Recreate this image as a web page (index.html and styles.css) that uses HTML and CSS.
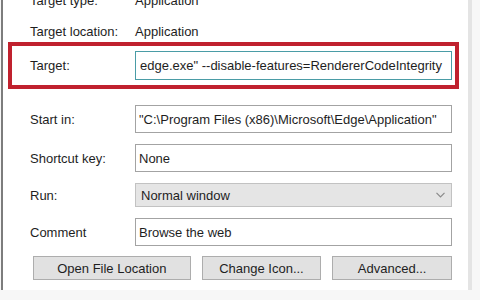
FILE: index.html
```html
<!DOCTYPE html>
<html lang="en">
<head>
  <meta charset="UTF-8">
  <title>Properties - Shortcut</title>
  <link rel="stylesheet" href="styles.css">
</head>
<body>
  <div class="sheet">
    <div class="info first">
      <span class="label">Target type:</span>
      <span class="value">Application</span>
    </div>
    <div class="info second">
      <span class="label">Target location:</span>
      <span class="value">Application</span>
    </div>

    <div class="highlight">
      <div class="field">
        <label class="label" for="target">Target:</label>
        <input type="text" id="target" class="text focused" value="edge.exe&quot; --disable-features=RendererCodeIntegrity">
      </div>
    </div>

    <div class="field start">
      <label class="label" for="startIn">Start in:</label>
      <input type="text" id="startIn" class="text" value="&quot;C:\Program Files (x86)\Microsoft\Edge\Application&quot;">
    </div>
    <div class="field">
      <label class="label" for="hotkey">Shortcut key:</label>
      <input type="text" id="hotkey" class="text" value="None">
    </div>
    <div class="field">
      <label class="label" for="run">Run:</label>
      <div class="select" id="run">
        <span>Normal window</span>
        <svg width="9" height="6" viewBox="0 0 9 6"><polyline points="0.5,0.8 4.5,4.8 8.5,0.8" fill="none" stroke="#8a8a8a" stroke-width="1.2"/></svg>
      </div>
    </div>
    <div class="field">
      <label class="label" for="comment">Comment</label>
      <input type="text" id="comment" class="text" value="Browse the web">
    </div>

    <div class="buttons">
      <button class="btn wide">Open File Location</button>
      <button class="btn">Change Icon...</button>
      <button class="btn">Advanced...</button>
    </div>
  </div>
</body>
</html>
```

FILE: styles.css
```css
body {
  margin: 0;
  background-color: #f7f7f7;
  font-family: "Liberation Sans", Arial, sans-serif;
  font-size: 13px;
  color: #1e1e1e;
  overflow: hidden;
}
.sheet {
  margin-left: 1px;
  width: 422px;
  height: 300px;
  padding: 0 16px 0 27px;
  background-color: #fff;
  border-left: 2px solid #7d7d7d;
  border-right: 4px solid #e4e4e4;
}
.info {
  display: flex;
  height: 22px;
  line-height: 22px;
}
.info.first {
  margin-top: -10px;
}
.info.second {
  margin-top: 9px;
}
.label {
  width: 105px;
  flex-shrink: 0;
}
.highlight {
  margin: -1px -7px 0 -22px;
  padding: 5px 3px 5px 18px;
  border: 4px solid #c0212e;
}
.field {
  display: flex;
  align-items: center;
  margin-top: 11px;
}
.highlight .field {
  margin-top: 0;
}
.field.start {
  margin-top: 16px;
}
.text {
  box-sizing: border-box;
  width: 317px;
  height: 28px;
  margin: 0;
  padding: 0 3px;
  border: 1px solid #a3a3a3;
  background-color: #fff;
  font-family: inherit;
  font-size: 13px;
  color: #1e1e1e;
  outline: none;
}
.text.focused {
  height: 29px;
  padding-left: 4px;
  border-color: #4a9ca6;
}
.select {
  box-sizing: border-box;
  width: 317px;
  height: 24px;
  display: flex;
  align-items: center;
  justify-content: space-between;
  padding: 0 6px 0 5px;
  background-color: #e5e5e5;
  border: 1px solid #c2c2c2;
}
.buttons {
  display: flex;
  gap: 11px;
  margin-top: 10px;
  padding-left: 3px;
}
.btn {
  box-sizing: border-box;
  width: 120px;
  height: 24px;
  padding: 0;
  background-color: #e1e1e1;
  border: 1px solid #adadad;
  font-family: inherit;
  font-size: 13px;
  color: #1e1e1e;
}
.btn.wide {
  width: 158px;
}
```
